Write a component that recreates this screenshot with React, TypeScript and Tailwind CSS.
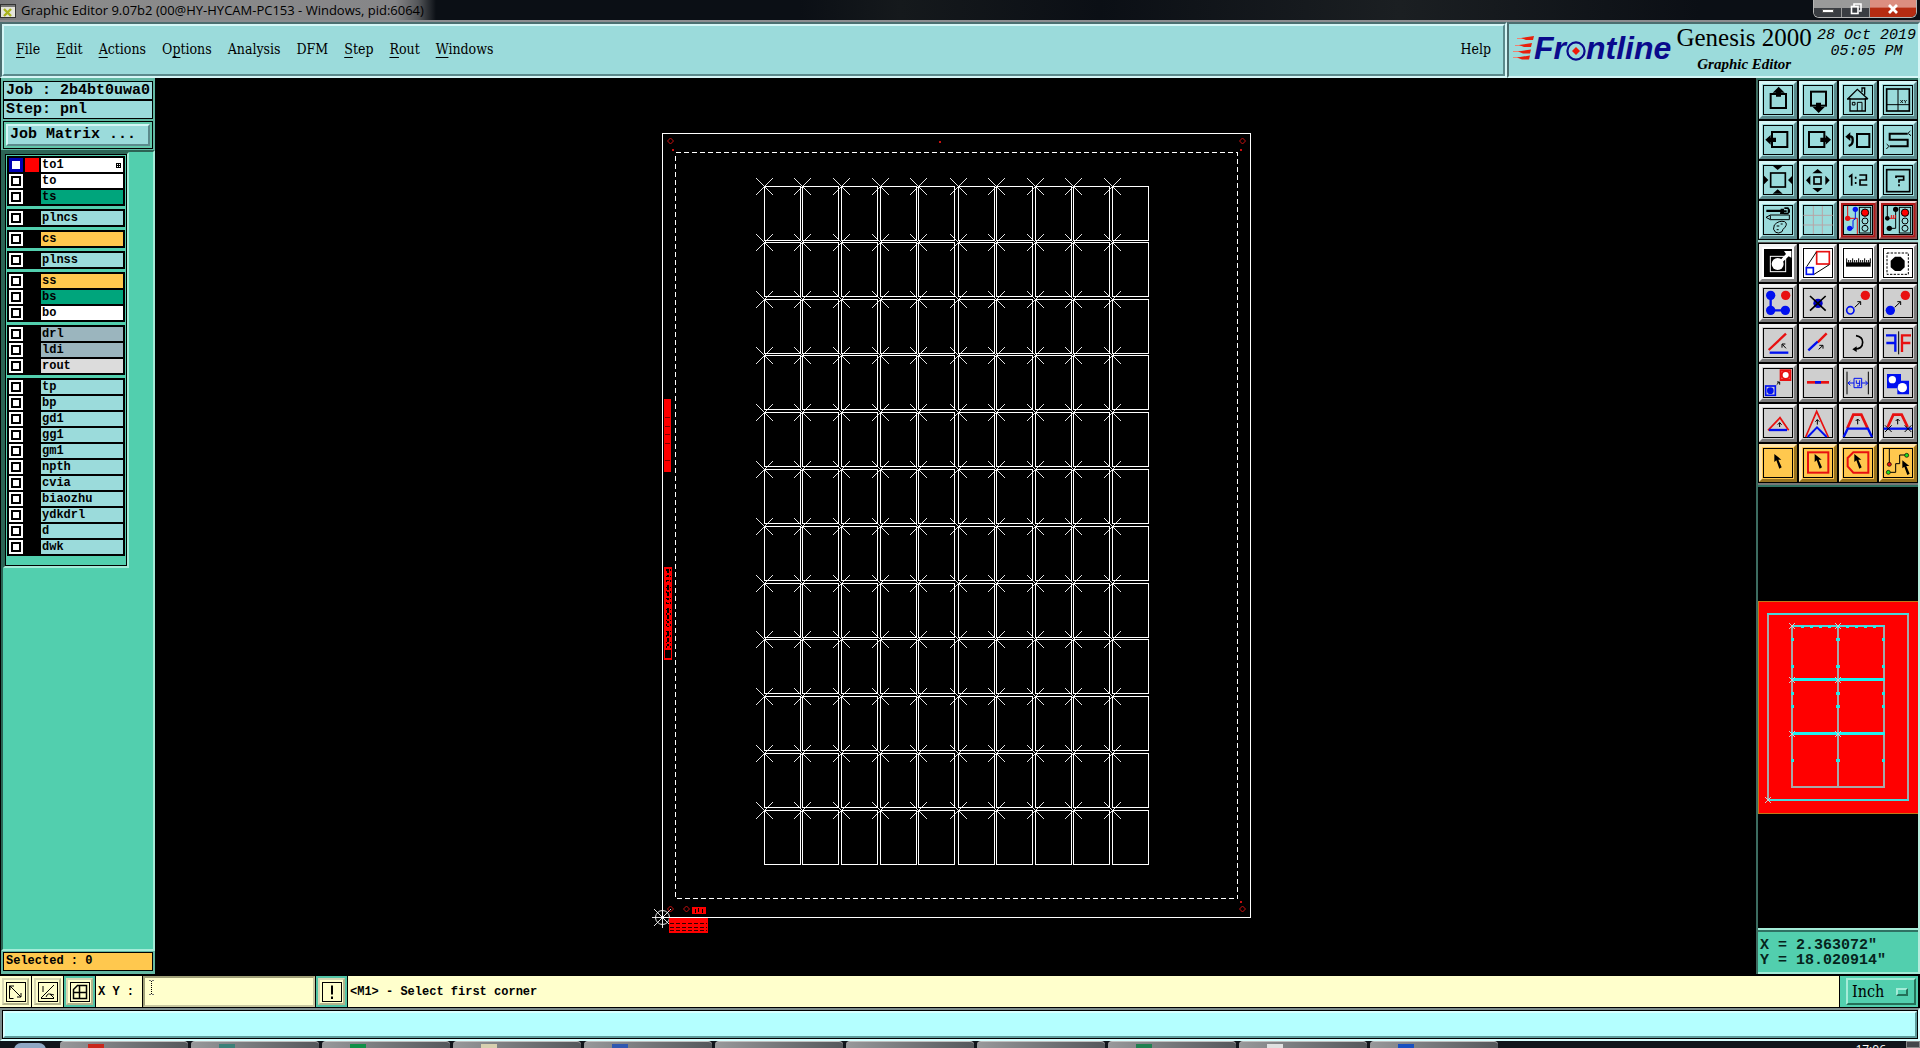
import type { ReactNode } from "react";

const mono = "font-['Liberation_Mono',monospace]";
const serif = "font-['DejaVu_Serif_Condensed','DejaVu_Serif',serif]";

const tealBevel = "border-[#d5f6f6] border-r-[#5b8a8c] border-b-[#5b8a8c]";

function TitleBar() {
  return (
    <div className="flex h-[22px] shrink-0 items-start justify-between border-b-2 border-[#8d8d90] bg-[linear-gradient(to_right,#77777a_0,#8b8b8b_60px,#868688_395px,#55575a_418px,#0b0f15_436px,#0b0f15_800px,#15191c_900px,#0b0f15_1100px,#1b1f22_1400px,#0b0f15_1700px)]">
      <div className="flex h-5 items-center gap-[5px]">
        <svg width="16" height="16" viewBox="0 0 16 16" className="mt-1" aria-hidden="true">
          <rect x="0" y="0" width="16" height="14" fill="#333" />
          <rect x="1" y="1" width="14" height="12" fill="#e4e4da" />
          <rect x="1" y="1" width="14" height="2" fill="#777" />
          <path d="M4 5l7 7M11 5l-7 7" stroke="#a9b41c" strokeWidth="2.4" />
        </svg>
        <span className="font-['Open_Sans','Noto_Sans',sans-serif] text-[13px] leading-5 text-black">
          Graphic Editor 9.07b2 (00@HY-HYCAM-PC153 - Windows, pid:6064)
        </span>
      </div>
      <div className="mr-[3px] flex h-[18px] overflow-hidden rounded-b-md border border-t-0 border-[#b5b5b5]">
        <button aria-label="Minimize" className="flex w-7 items-center justify-center border-r border-[#999] bg-linear-to-b from-[#9a9a9a] from-45% to-[#3a3d42] to-50%">
          <span className="mt-1 h-1 w-3 border border-[#555] bg-white" />
        </button>
        <button aria-label="Restore" className="flex w-7 items-center justify-center border-r border-[#999] bg-linear-to-b from-[#9a9a9a] from-45% to-[#3a3d42] to-50%">
          <svg width="12" height="12" viewBox="0 0 12 12" fill="none" stroke="#fff" strokeWidth="1.6" aria-hidden="true">
            <path d="M4 3V1h7v7H9" />
            <rect x="1.5" y="3.5" width="6.500" height="7" />
          </svg>
        </button>
        <button aria-label="Close" className="flex w-[46px] items-center justify-center bg-linear-to-b from-[#dc8e80] from-40% to-[#b62c12] to-50%">
          <svg width="12" height="10" viewBox="0 0 12 10" stroke="#fff" strokeWidth="2.8" aria-hidden="true">
            <path d="M2 1l8 8M10 1L2 9" />
          </svg>
        </button>
      </div>
    </div>
  );
}

const menus: [string, string, string][] = [
  ["", "F", "ile"],
  ["", "E", "dit"],
  ["", "A", "ctions"],
  ["O", "p", "tions"],
  ["Analysis", "", ""],
  ["DFM", "", ""],
  ["", "S", "tep"],
  ["", "R", "out"],
  ["", "W", "indows"],
];

function Logo() {
  return (
    <div className="flex items-center" role="img" aria-label="Frontline">
      <svg width="22" height="24" viewBox="0 0 22 24" className="-mr-px" aria-hidden="true">
        <g stroke="#f08070" strokeWidth="1">
          <path d="M4 2.500h12M2 9.500h12M0 15.500h12M0 21.500h12" />
        </g>
        <g fill="#e8200c">
          <path d="M8 2l13-2-1 4h-7zM6 9l13-2-1 4h-7zM5 15.500l13-2-1 4h-7zM4 21.500l13-2-1 4h-7z" />
        </g>
      </svg>
      <span className="font-['Liberation_Sans',sans-serif] text-[32px] leading-8 font-bold text-[#0a0a8c] italic">Fr</span>
      <svg width="20" height="20" viewBox="0 0 20 20" className="mt-[5px]" aria-hidden="true">
        <circle cx="10" cy="10" r="8.600" fill="none" stroke="#0a0a8c" strokeWidth="2.200" />
        <path d="M10 6l4 4-4 4-4-4z" fill="#f01808" />
      </svg>
      <span className="font-['Liberation_Sans',sans-serif] text-[32px] leading-8 font-bold text-[#0a0a8c] italic">ntline</span>
    </div>
  );
}

function Header() {
  return (
    <header className="flex h-14 shrink-0 bg-[#5b8a8c]">
      <div className="flex flex-1 border-2 border-t-[#4c6e70] border-l-[#4c6e70] border-r-[#d5f6f6] border-b-[#d5f6f6]">
        <nav className={`flex flex-1 items-center border-2 bg-[#9bdbdb] px-3 pb-0.5 text-[14px] text-black ${serif} ${tealBevel}`}>
          <div className="flex gap-4">
            {menus.map(([a, u, b]) => (
              <button key={a + u + b} className="leading-5">
                {a}
                {u && <span className="underline decoration-1 underline-offset-[3px]">{u}</span>}
                {b}
              </button>
            ))}
          </div>
          <button className="ml-auto leading-5">Help</button>
        </nav>
      </div>
      <div className="flex w-[413px] border-2 border-t-[#4c6e70] border-l-[#4c6e70] border-r-[#d5f6f6] border-b-[#d5f6f6] bg-[#9bdbdb]">
        <div className="flex flex-1 items-start justify-between pl-1">
          <div className="pt-2">
            <Logo />
          </div>
          <div className="flex flex-col items-center font-['Liberation_Serif',serif] text-black">
            <span className="text-[25px] leading-7 font-medium">Genesis 2000</span>
            <span className="pt-0.5 text-[15px] leading-5 font-bold italic">Graphic Editor</span>
          </div>
          <div className={`flex flex-col items-center pt-1 pr-0.5 text-[15px] leading-4 text-black italic ${mono}`}>
            <span>28 Oct 2019</span>
            <span>05:05 PM</span>
          </div>
        </div>
      </div>
    </header>
  );
}

type Layer = { name: string; bg: string; active?: boolean };
const cyan = "bg-[#9bdbdb]";
const layerGroups: Layer[][] = [
  [
    { name: "to1", bg: "bg-white", active: true },
    { name: "to", bg: "bg-white" },
    { name: "ts", bg: "bg-[#00a57c]" },
  ],
  [{ name: "plncs", bg: cyan }],
  [{ name: "cs", bg: "bg-[#ffc84e]" }],
  [{ name: "plnss", bg: cyan }],
  [
    { name: "ss", bg: "bg-[#ffc84e]" },
    { name: "bs", bg: "bg-[#00a57c]" },
    { name: "bo", bg: "bg-white" },
  ],
  [
    { name: "drl", bg: "bg-[#9bb5be]" },
    { name: "ldi", bg: "bg-[#9bb5be]" },
    { name: "rout", bg: "bg-[#dcdcdc]" },
  ],
  ["tp", "bp", "gd1", "gg1", "gm1", "npth", "cvia", "biaozhu", "ydkdrl", "d", "dwk"].map((name) => ({ name, bg: cyan })),
];

function LayerRow({ layer }: { layer: Layer }) {
  return (
    <label className="flex h-4 items-center gap-0.5 px-0.5">
      <span className={`flex size-3.5 items-center justify-center ${layer.active ? "bg-[#0000b4]" : "bg-white"}`}>
        <input
          type="checkbox"
          defaultChecked={layer.active}
          className="size-2.5 appearance-none border-2 border-black bg-white checked:size-2 checked:border-0"
        />
      </span>
      <span className={`size-3.5 ${layer.active ? "bg-[#ff0000]" : "bg-black"}`} />
      <span className={`flex h-3.5 flex-1 items-center justify-between pr-0.5 pl-px text-[12px] leading-3.5 font-bold text-black ${mono} ${layer.bg}`}>
        {layer.name}
        {layer.active && (
          <svg width="5" height="5" viewBox="0 0 5 5" shapeRendering="crispEdges" aria-hidden="true">
            <path d="M.5 .5h4v4h-4zM2.500 0v5M0 2.500h5" fill="none" stroke="#000" />
          </svg>
        )}
      </span>
    </label>
  );
}

function LeftPanel() {
  return (
    <aside className="flex w-[155px] shrink-0 flex-col border-l border-black bg-[#63b8a3] pb-[3px]">
      <div className={`mx-0.5 mt-[3px] border border-black text-[15px] font-semibold text-black ${mono}`}>
        <div className="h-[18px] border-b border-black bg-[#9bdbdb] pl-0.5 leading-[18px]">Job : 2b4bt0uwa0</div>
        <div className="h-[18px] border-t border-black bg-[#9bdbdb] pl-0.5 leading-[18px]">Step: pnl</div>
      </div>
      <div className="mx-0.5 mt-0.5 border border-black bg-[#63c8ab] p-0.5">
        <button className={`block h-[22px] w-full border-2 bg-[#9bdbdb] pl-0.5 text-left text-[15px] leading-[18px] font-semibold text-black ${mono} ${tealBevel}`}>
          Job Matrix ...
        </button>
      </div>
      <div className="mt-px flex-1 border-2 border-t-[#2c6455] border-l-[#2c6455] border-r-[#a4ecd8] border-b-[#a4ecd8] bg-[#52cfae]">
        <div className="w-[126px] border-2 border-t-[#2c6455] border-l-[#2c6455] border-r-[#a4ecd8] border-b-[#a4ecd8]">
          <div className="flex flex-col gap-[3px] border border-black px-px pt-px pb-[9px]">
            {layerGroups.map((g, i) => (
              <div key={i} className="bg-black py-px">
                {g.map((l) => (
                  <LayerRow key={l.name} layer={l} />
                ))}
              </div>
            ))}
          </div>
        </div>
      </div>
      <div className={`mx-0.5 mt-px h-[19px] border border-black bg-[#ffc84e] pl-0.5 text-[12px] leading-[17px] font-bold text-black ${mono}`}>
        Selected : 0
      </div>
    </aside>
  );
}

const xs = [764, 802, 841, 880, 918, 958, 996, 1035, 1073, 1112];
const ys = [186, 242, 299, 355, 412, 469, 526, 583, 639, 696, 753, 810];

function Board() {
  const marks = [
    [670, 141],
    [1242, 141],
    [670, 909],
    [686, 909],
    [1242, 909],
  ];
  return (
    <main className="flex min-w-0 flex-1 items-center justify-center overflow-hidden bg-black">
      <svg width="640" height="840" viewBox="636 106 640 840" fill="none" className="shrink-0" role="img" aria-label="Panel layout">
        <g stroke="#fff" shapeRendering="crispEdges">
          <rect x="662.500" y="133.500" width="588" height="784" />
          <rect x="675.500" y="152.500" width="562" height="746" strokeDasharray="5 3" />
          {ys.map((y) => xs.map((x) => <rect key={`${x}-${y}`} x={x + 0.5} y={y + 0.5} width="36" height="54" />))}
        </g>
        <g stroke="#fff" strokeWidth="0.9">
          {ys.map((y) =>
            xs.map((x) => <path key={`${x}-${y}`} d={`M${x - 8} ${y - 8}l17 17M${x + 9} ${y - 8}l-17 17`} />),
          )}
          <circle cx="662.500" cy="917.500" r="7" />
          <path d="M652 917.500h21M662.500 907v21M654 909l17 17M671 909l-17 17" />
        </g>
        <g stroke="#c81010">
          {marks.map(([x, y]) => (
            <path key={`${x}-${y}`} d={`M${x + 0.5} ${y - 3}l3 3-3 3-3-3z`} />
          ))}
        </g>
        <g fill="#c81010">
          <rect x="672" y="149" width="2" height="2" />
          <rect x="939" y="141" width="2" height="2" />
          <rect x="1240" y="149" width="2" height="2" />
          <rect x="1240" y="901" width="2" height="2" />
        </g>
        <g fill="#f00" shapeRendering="crispEdges">
          <rect x="664" y="399" width="7" height="73" />
          <rect x="664" y="567" width="8" height="93" />
          <rect x="692" y="907" width="14" height="7" />
          <rect x="669" y="918" width="39" height="15" />
        </g>
        <g stroke="#000" shapeRendering="crispEdges">
          <path d="M665 417.500h5M665 426.500h5M665 434.500h5M665 443.500h5M665 460.500h5" strokeOpacity="0.5" />
          <path d="M668 569v80" strokeDasharray="4 2 2 3 1 4 5 2" strokeWidth="2" />
          <path d="M666.500 569v80M670.500 569v80" strokeDasharray="2 5 1 3" />
          <path d="M668 650v8" strokeWidth="6" />
          <path d="M695.500 909v4M698.500 908v4M702.500 909v4" />
          <path d="M670 923.500h37M670 927.500h37M670 930.500h37" strokeDasharray="4 2" strokeOpacity="0.8" />
        </g>
      </svg>
    </main>
  );
}

const T = "teal", W = "white", G = "gray", O = "orange", R = "red";
type Tone = "teal" | "white" | "gray" | "orange" | "red";
const tones: Record<Tone, string> = {
  teal: "bg-[#9bdbdb] border-[#d5f6f6] border-r-[#5b8a8c] border-b-[#5b8a8c]",
  white: "bg-white border-[#f4f4f4] border-r-[#8a8a8a] border-b-[#8a8a8a]",
  gray: "bg-[#cfcfcf] border-[#f2f2f2] border-r-[#7c7c7c] border-b-[#7c7c7c]",
  orange: "bg-[#ffc84e] border-[#ffe6ae] border-r-[#9a7420] border-b-[#9a7420]",
  red: "bg-[#9bdbdb] border-[#f0d0d0] border-r-[#8c5050] border-b-[#8c5050]",
};
type Tool = { label: string; tone: Tone; art: ReactNode; noFrame?: boolean };

const B = "#0010f0", D = "#e81010";
const cursor = (x: number, y: number) => (
  <path d={`M${x} ${y}v24l6-5 9 25 7-4-10-23h9z`} fill="#000" />
);

/* Artwork uses a 114-unit cell with a 120-unit pitch that starts at (27, 15). */
const viewTools: Tool[] = [
  { label: "Pan up", tone: T, art: <><rect x="62" y="54" width="46" height="42" fill="none" stroke="#000" strokeWidth="6" /><path d="M86 32l-18 18h10v12h15V50h11z" /></> },
  { label: "Pan down", tone: T, art: <><rect x="183" y="47" width="45" height="42" fill="none" stroke="#000" strokeWidth="6" /><path d="M206 111l-18-18h10V80h15v13h11z" /></> },
  { label: "Home", tone: T, art: <g fill="none" stroke="#000" strokeWidth="3"><path d="M293 69l29-29 32 29M300 66v39h46V66M291 69h62M336 48V36h8v20" strokeWidth="4" /><path d="M322 105V79h14v26M307 79h8v8h-8z" /></g> },
  { label: "Zoom XY", tone: T, art: <g fill="none" stroke="#000"><rect x="410" y="39" width="68" height="66" strokeWidth="5" /><path d="M444 40v64M411 86h67" strokeWidth="3" /><path d="M451 72l8 9M459 72l-8 9M462 72l4 5 4-5M466 77v5" strokeWidth="2.500" /></g> },
  { label: "Pan left", tone: T, art: <><rect x="66" y="168" width="46" height="45" fill="none" stroke="#000" strokeWidth="6" /><path d="M46 191l16-14v8h16v13H62v8z" /></> },
  { label: "Pan right", tone: T, art: <><rect x="177" y="168" width="46" height="45" fill="none" stroke="#000" strokeWidth="6" /><path d="M243 191l-16-14v8h-16v13h16v8z" /></> },
  { label: "Previous view", tone: T, art: <><rect x="321" y="174" width="37" height="39" fill="none" stroke="#000" strokeWidth="6" /><path d="M292 181h8q8 0 8 9v5q0 11-12 15" fill="none" stroke="#000" strokeWidth="7" /><path d="M286 182l15-13v26z" /></> },
  { label: "Serpentine", tone: T, art: <><path d="M473 173h-54v18h54v20h-54" fill="none" stroke="#000" strokeWidth="6" /><path d="M473 173l8-8M475 173l8 6M417 211l-7-7M417 211l-8 8" fill="none" stroke="#000" strokeWidth="3" /></> },
  { label: "Zoom out", tone: T, art: <><rect x="62" y="291" width="44" height="42" fill="none" stroke="#000" strokeWidth="5" /><path d="M68 269h30l-15 13zM68 353h30l-15-13zM40 297v30l15-15zM129 297v30l-15-15z" /></> },
  { label: "Zoom in", tone: T, art: <><rect x="192" y="303" width="21" height="21" fill="none" stroke="#000" strokeWidth="5" /><path d="M187 292h31l-15-13zM187 336h31l-15 13zM181 299v28l-13-14zM226 299v28l13-14z" /></> },
  { label: "Scale 1:2", tone: T, art: <g fill="none" stroke="#000" strokeWidth="5"><path d="M297 303l8-6v32M317 302v6M317 318v6M328 297h21v15h-19v15h22" /></g> },
  { label: "Query", tone: T, art: <g fill="none" stroke="#000"><rect x="410" y="281" width="69" height="66" strokeWidth="5" /><path d="M438 306v-5h23v11h-14v8M447 325v6" strokeWidth="5" /></g> },
  { label: "Setup", tone: T, art: <><path d="M49 401h48v7H49zM92 398h10v5h8v6h-8v5H90zM103 394h12l5 7v8l-6 6h-13v-5h12v-11h-10z" /><path d="M48 424l13-7h57v14H61zM61 418v12" fill="none" stroke="#000" strokeWidth="3" /><path d="M73 447q14-15 31-10 10 6 0 18-6 4-8 12-10 7-19 2-11-8-4-22zM80 450h8M92 444h6M80 461h6" fill="none" stroke="#000" strokeWidth="3" /></> },
  { label: "Grid", tone: T, art: <g fill="none" stroke="#b7a5a7" strokeWidth="3"><path d="M190 390v84M217 390v84M160 418h88M160 447h88" /></g> },
  { label: "Snap on", tone: R, art: <><rect x="276" y="384" width="97" height="97" fill="none" stroke="#b01818" strokeWidth="6" /><path d="M293 390v37h29v47" fill="none" stroke={D} strokeWidth="3" /><path d="M316 401v28l-7 4v24h-10" fill="none" stroke={B} strokeWidth="3" /><circle cx="293" cy="427" r="8" fill={D} /><circle cx="316" cy="400" r="8" fill={B} /><circle cx="299" cy="457" r="8" fill={B} /><rect x="328" y="394" width="34" height="77" fill="none" stroke="#000" strokeWidth="3" /><circle cx="345" cy="410" r="11" fill="#f00" stroke="#000" strokeWidth="3" /><circle cx="345" cy="435" r="9" fill="none" stroke="#000" strokeWidth="3" /><circle cx="345" cy="457" r="9" fill="none" stroke="#000" strokeWidth="3" /></> },
  { label: "Snap off", tone: R, art: <><rect x="396" y="384" width="97" height="97" fill="none" stroke="#b01818" strokeWidth="6" /><path d="M412 390v37M437 401v56h-18" fill="none" stroke="#000" strokeWidth="3" /><path d="M419 427h17M424 417v9M430 417v9M436 417v9" fill="none" stroke={D} strokeWidth="3" /><circle cx="412" cy="427" r="7" /><circle cx="437" cy="400" r="8" /><circle cx="418" cy="457" r="8" /><rect x="448" y="394" width="34" height="77" fill="none" stroke="#000" strokeWidth="3" /><circle cx="465" cy="410" r="11" fill="#f00" stroke="#000" strokeWidth="3" /><circle cx="465" cy="435" r="9" fill="none" stroke="#000" strokeWidth="3" /><circle cx="465" cy="457" r="9" fill="none" stroke="#000" strokeWidth="3" /></> },
];

const editTools: Tool[] = [
  { label: "Negative pad", tone: W, noFrame: true, art: <><rect x="42" y="30" width="84" height="84" /><rect x="61" y="52" width="46" height="46" fill="none" stroke="#fff" strokeWidth="3" /><circle cx="83" cy="75" r="18" fill="#fff" /><path d="M92 62l16-17-6-9h22v20l-8-4-18 17z" fill="#fff" /></> },
  { label: "Transform", tone: W, art: <><rect x="200" y="38" width="38" height="37" fill="none" stroke={D} strokeWidth="5" /><rect x="169" y="86" width="21" height="20" fill="none" stroke={B} strokeWidth="5" /><path d="M170 83l29-44M192 106l46-29" stroke="#000" strokeWidth="3" fill="none" /></> },
  { label: "Measure", tone: W, art: <><path d="M288 70h74v13h-74z" /><path d="M290 58v14M296 63v8M302 63v8M308 58v14M314 63v8M320 63v8M326 58v14M332 63v8M338 63v8M344 58v14M350 63v8M356 63v8M361 58v14" stroke="#000" strokeWidth="3" /></> },
  { label: "Select area", tone: W, art: <><rect x="411" y="42" width="64" height="64" fill="none" stroke="#000" strokeWidth="3" strokeDasharray="7 4" /><path d="M435 53h17l12 12v20l-12 11h-17l-13-11V65z" /></> },
  { label: "Add line", tone: G, art: <><path d="M62 168v46h46" fill="none" stroke={B} strokeWidth="7" /><circle cx="62" cy="169" r="14" fill={B} /><circle cx="62" cy="214" r="14" fill={B} /><circle cx="106" cy="214" r="14" fill={B} /><circle cx="107" cy="169" r="14" fill={D} /></> },
  { label: "Delete", tone: G, art: <><circle cx="204" cy="193" r="14" fill="#0000c8" /><path d="M180 171l47 44M227 171l-47 44" stroke="#000" strokeWidth="5" /></> },
  { label: "Move", tone: G, art: <><circle cx="346" cy="169" r="14" fill={D} /><circle cx="301" cy="214" r="11" fill="none" stroke={B} strokeWidth="5" /><path d="M314 205l17-16M322 188h10v10" stroke="#000" strokeWidth="3" fill="none" /></> },
  { label: "Copy", tone: G, art: <><circle cx="466" cy="169" r="14" fill={D} /><circle cx="421" cy="214" r="14" fill={B} /><path d="M434 205l17-16M442 188h10v10" stroke="#000" strokeWidth="3" fill="none" /></> },
  { label: "Rotate line", tone: G, art: <><path d="M56 333l52-49" stroke={D} strokeWidth="7" /><path d="M59 341h56" stroke={B} strokeWidth="7" /><path d="M108 328l-11-12M96 326v-11h10" stroke="#000" strokeWidth="3" fill="none" /></> },
  { label: "Extend line", tone: G, art: <><path d="M203 310l27-27" stroke={D} strokeWidth="7" /><path d="M175 334l28-26" stroke={B} strokeWidth="7" /><path d="M206 331l12-11M208 319h11v10" stroke="#000" strokeWidth="3" fill="none" /></> },
  { label: "Rotate", tone: G, art: <><path d="M318 290q20 3 20 20 0 21-26 20" stroke="#000" strokeWidth="5" fill="none" /><path d="M307 331l13-9v17z" /></> },
  { label: "Mirror", tone: G, art: <><path d="M408 289h28v49M436 312h-27" fill="none" stroke={B} strokeWidth="7" /><path d="M483 289h-27v50M456 312h25" fill="none" stroke={D} strokeWidth="7" /><path d="M446 277v69" stroke="#000" strokeWidth="3" /></> },
  { label: "Resize pad", tone: G, art: <><rect x="92" y="154" width="29" height="29" fill="#fff" stroke={D} strokeWidth="6" /><circle cx="107" cy="168" r="12" fill="#fff" stroke={D} strokeWidth="6" /><rect x="47" y="201" width="29" height="28" fill="none" stroke={B} strokeWidth="5" /><circle cx="61" cy="215" r="10" fill={B} /><path d="M80 197l7-7M81 189h8v8" stroke="#000" strokeWidth="3" fill="none" /></> },
  { label: "Break line", tone: G, art: <><path d="M171 190h66" stroke={D} strokeWidth="8" /><path d="M195 190h18" stroke={B} strokeWidth="8" /></> },
  { label: "Spacing", tone: G, art: <><path d="M291 158v68M355 158v68" stroke="#000" strokeWidth="3" /><path d="M295 192h17M336 192h16M301 186l-7 6 7 7M346 186l7 6-7 7M312 178h23v28h-23zM319 184v9h10M329 184v17h-8" stroke={B} strokeWidth="3" fill="none" /></> },
  { label: "Merge surface", tone: G, art: <><path d="M411 165h42v20h24v41h-35v-18h-31z" fill={B} /><circle cx="427" cy="182" r="11" fill="#fff" /><circle cx="457" cy="206" r="14" fill="#fff" /></> },
  { label: "Triangle", tone: G, art: <><path d="M54 334l36-38 26 38" fill="none" stroke={D} strokeWidth="5" /><path d="M57 333h54" stroke={B} strokeWidth="7" /><path d="M89 324v-13M83 317l6-6 6 6" stroke="#000" strokeWidth="3" fill="none" /></> },
  { label: "Stretch corner", tone: G, art: <><path d="M167 354l33-77 35 77" fill="none" stroke={D} strokeWidth="5" /><path d="M173 354l28-29 29 29" fill="none" stroke={B} strokeWidth="6" /><path d="M202 317v-15M196 308l6-6 6 6" stroke="#000" strokeWidth="3" fill="none" /></> },
  { label: "Stretch parallel", tone: G, art: <><path d="M292 328l18-41h24l19 41" fill="none" stroke={D} strokeWidth="8" /><path d="M281 354l12-25h61l12 25" fill="none" stroke={B} strokeWidth="7" /><path d="M323 316v-16M317 306l6-6 6 6" stroke="#000" strokeWidth="3" fill="none" /></> },
  { label: "Stretch trim", tone: G, art: <><path d="M413 324l17-37h25l18 37" fill="none" stroke={D} strokeWidth="8" /><path d="M401 329h86" fill="none" stroke={B} strokeWidth="7" /><path d="M443 316v-16M437 306l6-6 6 6M405 319l20 20M425 319l-20 20M464 319l20 20M484 319l-20 20" stroke="#000" strokeWidth="3" fill="none" /></> },
  { label: "Select", tone: O, art: cursor(73, 405) },
  { label: "Select in rectangle", tone: O, art: <><rect x="174" y="400" width="61" height="61" fill="none" stroke={D} strokeWidth="6" />{cursor(194, 405)}</> },
  { label: "Select in polygon", tone: O, art: <><path d="M310 400h45v61h-45l-17-19v-25z" fill="none" stroke={D} strokeWidth="6" />{cursor(313, 405)}</> },
  { label: "Select net", tone: O, art: <><path d="M418 389v46M417 460h20v-26h12v-26h16" fill="none" stroke="#000" strokeWidth="3" /><circle cx="418" cy="436" r="6" fill={D} stroke="#000" strokeWidth="2" /><circle cx="415" cy="460" r="6" fill="#20e020" stroke="#000" strokeWidth="2" /><circle cx="470" cy="409" r="6" fill="#20e020" stroke="#000" strokeWidth="2" />{cursor(457, 424)}</> },
];

function ToolGrid({ tools, startRow = 0 }: { tools: Tool[]; startRow?: number }) {
  return (
    <div className="grid grid-cols-4 gap-0.5">
      {tools.map((t, i) => {
        const x = 27 + 120 * (i % 4);
        const y = 15 + 120 * (Math.floor(i / 4) + startRow);
        return (
          <button key={t.label} aria-label={t.label} className={`relative size-[38px] border-3 ${tones[t.tone]}`}>
            <svg width="38" height="38" viewBox={`${x} ${y} 114 114`} className="absolute -top-[3px] -left-[3px]" aria-hidden="true">
              {!t.noFrame && (
                <rect x={x + 13.5} y={y + 13.5} width="87" height="87" fill="none" stroke="#000" strokeWidth="3" />
              )}
              {t.art}
            </svg>
          </button>
        );
      })}
    </div>
  );
}

function Preview() {
  return (
    <svg width="160" height="213" viewBox="1758 602 160 213" fill="none" shapeRendering="crispEdges" className="block" role="img" aria-label="Overview">
      <rect x="1758.500" y="602.500" width="160" height="212" fill="#f00" stroke="#c07818" />
      <g strokeWidth="2">
        <path d="M1792 627v161M1838 627v161M1884 627v161M1768 615v186M1908 615v186M1791 788h94" stroke="#a8a8a8" />
        <path d="M1767 615h142M1767 801h142M1791 627h94" stroke="#48d8dc" />
        <path d="M1791 680.500h94M1791 734.500h94" stroke="#20f0f0" strokeWidth="3" />
        <path d="M1801 628h80" stroke="#20f0f0" strokeDasharray="3 6" />
      </g>
      <g fill="#20e8e8">
        {[639, 666, 693, 706, 760].map((y) => (
          <g key={y}>
            <rect x="1791" y={y} width="3" height="3" />
            <rect x="1836" y={y} width="4" height="3" />
            <rect x="1882" y={y} width="3" height="3" />
          </g>
        ))}
      </g>
      <g stroke="#c8d0d0">
        {[[1792, 627], [1838, 627], [1792, 681], [1838, 681], [1792, 735], [1838, 735], [1768, 801]].map(([x, y]) => (
          <path key={`${x}-${y}`} d={`M${x - 3} ${y - 3}l6 6M${x + 3} ${y - 3}l-6 6`} />
        ))}
      </g>
    </svg>
  );
}

function RightPanel() {
  return (
    <aside className="flex w-[164px] shrink-0 flex-col border-r-2 border-l-2 border-l-[#3c6c60] border-r-[#b4ecdc] bg-black">
      <div className="border-t-2 border-b-2 border-t-[#2f7263] border-b-[#a9d9d4] bg-black px-px pt-px pb-px">
        <ToolGrid tools={viewTools} />
      </div>
      <div className="border-t border-b-2 border-t-[#555] border-b-[#777] bg-black px-px pt-px pb-px">
        <ToolGrid tools={editTools.slice(0, 12)} />
        <div className="h-0.5" />
        <ToolGrid tools={editTools.slice(12)} startRow={1} />
      </div>
      <div className="h-0.5 bg-[#2f7263]" />
      <div className="flex flex-1 flex-col justify-center">
        <Preview />
      </div>
      <div className={`border-t-2 border-b-2 border-[#a4ecd8] bg-[#52cfae] text-[15px] leading-[15px] font-semibold text-[#06241c] ${mono}`}>
        <div className="border-t-2 border-[#2f7263] pt-1.5 pb-1 pl-0.5">
          <p>X = 2.363072"</p>
          <p>Y = 18.020914"</p>
        </div>
      </div>
    </aside>
  );
}

function CommandButton({ label, teal, children }: { label: string; teal?: boolean; children: ReactNode }) {
  return (
    <div className={`flex w-[31px] items-center justify-center ${teal ? "bg-[#52c4a6]" : "bg-[#ffffd0]"}`}>
      <button aria-label={label} className="flex h-[27px] w-[27px] items-center justify-center border-2 border-[#d8d8b4] border-r-[#b4b48c] border-b-[#b4b48c] bg-[#ffffcc]">
        <svg width="20" height="20" viewBox="0 0 20 20" fill="none" stroke="#000" aria-hidden="true">
          <rect x=".5" y=".5" width="19" height="19" />
          {children}
        </svg>
      </button>
    </div>
  );
}

function CommandBar() {
  return (
    <div className={`flex h-8 shrink-0 gap-px border-b border-black bg-black pr-0.5 text-[12px] font-bold text-black ${mono}`}>
      <CommandButton label="Absolute coordinates">
        <path d="M3.500 3.500v13h4M4 4l11 11M4 8V4h4M15 11v4h-4" />
      </CommandButton>
      <CommandButton label="Angle coordinates">
        <path d="M3 16.500h13M3 16L16 3M5 4v6M8 15q2-5 5-2l3 3M12 12l4 1" />
      </CommandButton>
      <CommandButton label="Grid snap" teal>
        <path d="M3.500 16.500v-9l4-4h9v13zM9.500 3v13M3 10.500h13" strokeWidth="1.500" />
      </CommandButton>
      <label htmlFor="xy" className="flex w-[46px] items-center bg-[#ffffcc] pl-0.5 whitespace-pre">X Y :</label>
      <div className="relative flex w-[172px]">
        <input id="xy" className="w-full border-2 border-[#a0a078] border-r-[#c8c8a0] border-b-[#c8c8a0] bg-[#ffffcc] px-1 outline-none" defaultValue="" />
        <svg width="5" height="15" viewBox="0 0 5 15" className="pointer-events-none absolute top-1 left-1.5" shapeRendering="crispEdges" aria-hidden="true">
          <path d="M2.500 1v13" stroke="#000" strokeDasharray="1 1" />
          <path d="M0 .5h2M3 .5h2M0 14.500h2M3 14.500h2" stroke="#777" />
        </svg>
      </div>
      <CommandButton label="Apply" teal>
        <path d="M10 3.500v9M10 14.500v2.500" strokeWidth="2" />
      </CommandButton>
      <div className="flex flex-1 items-center bg-[#ffffcc] pl-0.5">&lt;M1&gt; - Select first corner</div>
      <div className="flex w-[78px] items-center bg-[#52cfae] pl-1.5">
        <label className="relative flex h-[27px] w-[70px] items-center border-2 border-[#a4ecd8] border-r-[#247058] border-b-[#247058]">
          <select aria-label="Units" className={`w-full appearance-none bg-transparent pl-1 text-[16px] leading-5 font-normal ${serif}`}>
            <option>Inch</option>
            <option>MM</option>
          </select>
          <span className="pointer-events-none absolute right-1.5 h-2 w-3 border-2 border-[#a4ecd8] border-r-[#247058] border-b-[#247058]" />
        </label>
      </div>
    </div>
  );
}

function TaskBar() {
  const tops = [
    "bg-[#c8281c]", "bg-[#3c8078]", "bg-[#109048]", "bg-[#d8d0b0]", "bg-[#3058b0]", "bg-transparent",
    "bg-transparent", "bg-transparent", "bg-[#208050]", "bg-[#e0e0e0]", "bg-[#1850c0]",
  ];
  return (
    <footer className="flex h-[7px] shrink-0 items-end justify-between overflow-hidden bg-[#10151b]">
      <div className="flex h-full">
        <div className="flex w-[60px] justify-center pt-0.5">
          <span className="h-[7px] w-8 rounded-t-full bg-[#8fa8c4]" />
        </div>
        {tops.map((c, i) => (
          <div key={i} className="mr-[3px] flex w-32 rounded-t-sm border-t border-[#c0c0c0] bg-linear-to-r from-[#98999b] to-[#55585c] pt-0.5 pl-7">
            <span className={`h-1 w-4 ${c}`} />
          </div>
        ))}
      </div>
      <div className="flex h-full">
        <span className="h-full overflow-hidden pt-[3px] font-['Open_Sans',sans-serif] text-[12px] leading-3 text-white">17:06</span>
        <span className="ml-5 w-3.5 border border-[#888] bg-[#44474b]" />
      </div>
    </footer>
  );
}

export default function App() {
  return (
    <div className="flex h-screen flex-col overflow-hidden bg-black">
      <TitleBar />
      <Header />
      <div className="flex min-h-0 flex-1 border-b-2 border-black">
        <LeftPanel />
        <Board />
        <RightPanel />
      </div>
      <CommandBar />
      <div className="h-[33px] shrink-0 border-2 border-t-[#7c8c8c] border-l-[#7c8c8c] border-r-[#d8ffff] border-b-[#d8ffff]">
        <div className="h-full border border-black">
          <div className="h-full border-2 border-[#d8ffff] border-r-[#5e9c9c] border-b-[#5e9c9c] bg-[#b4ffff]" />
        </div>
      </div>
      <TaskBar />
    </div>
  );
}
